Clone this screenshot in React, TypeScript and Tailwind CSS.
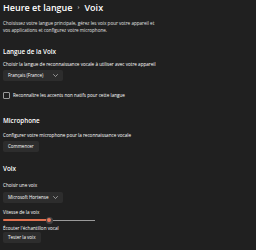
import React from "react";

const font = { fontFamily: '"Open Sans", "Liberation Sans", sans-serif' };

function Chevron() {
  return (
    <svg width="5" height="3" viewBox="0 0 10 6" fill="none">
      <path d="M1 1l4 4 4-4" stroke="#cfcfcf" strokeWidth="1.3" strokeLinecap="round" strokeLinejoin="round" />
    </svg>
  );
}

function Dropdown({ label }: { label: string }) {
  return (
    <div className="flex h-[11px] w-[60px] items-center justify-between rounded-[2px] bg-[#2d2d2d] pl-[5px] pr-[5px] text-[4.5px] text-white">
      <span>{label}</span>
      <Chevron />
    </div>
  );
}

function Btn({ label }: { label: string }) {
  return (
    <div className="flex h-[11px] w-fit items-center rounded-[2px] bg-[#2d2d2d] px-[5px] text-[4.5px] text-white">
      {label}
    </div>
  );
}

export default function App() {
  return (
    <div className="h-[250px] w-[256px] overflow-hidden bg-[#202020] pl-[3px] text-white" style={font}>
      <div className="flex items-center pt-[1px] text-[9px] font-semibold leading-[13px]">
        <span>Heure et langue</span>
        <span className="mx-[5px] text-[6px] text-[#cfcfcf]">›</span>
        <span>Voix</span>
      </div>
      <div className="mt-[6px] text-[4.6px] leading-[7px] text-[#e0e0e0]">
        Choisissez votre langue principale, gérez les voix pour votre appareil et
        <br />
        vos applications et configurez votre microphone.
      </div>
      <div className="mt-[13px] text-[6.3px] font-semibold leading-[10px]">Langue de la Voix</div>
      <div className="mt-[4px] text-[4.6px] leading-[7px]">Choisir la langue de reconnaissance vocale à utiliser avec votre appareil</div>
      <div className="mt-[2px]">
        <Dropdown label="Français (France)" />
      </div>
      <div className="mt-[11px] flex h-[7px] items-center gap-[3px]">
        <div className="h-[7px] w-[7px] rounded-[1px] border-[0.7px] border-[#9a9a9a]" />
        <span className="text-[4.6px]">Reconnaître les accents non natifs pour cette langue</span>
      </div>
      <div className="mt-[17px] text-[6.3px] font-semibold leading-[10px]">Microphone</div>
      <div className="mt-[5.5px] text-[4.6px] leading-[7px]">Configurer votre microphone pour la reconnaissance vocale</div>
      <div className="mt-[2.5px]">
        <Btn label="Commencer" />
      </div>
      <div className="mt-[12px] text-[6.3px] font-semibold leading-[10px]">Voix</div>
      <div className="mt-[7.5px] text-[4.6px] leading-[7px]">Choisir une voix</div>
      <div className="mt-[3.5px]">
        <Dropdown label="Microsoft Hortense" />
      </div>
      <div className="mt-[5.5px] text-[4.6px] leading-[7px]">Vitesse de la voix</div>
      <div className="relative mt-[1px] h-[7px] w-[92px]">
        <div className="absolute left-0 top-[2.75px] h-[1.5px] w-[46px] rounded-full bg-[#e0704f]" />
        <div className="absolute left-[46px] top-[3px] h-[1px] w-[46px] bg-[#9a9a9a]" />
        <div className="absolute left-[42.5px] top-0 h-[7px] w-[7px] rounded-full bg-[#454545]" />
        <div className="absolute left-[44.25px] top-[1.75px] h-[3.5px] w-[3.5px] rounded-full bg-[#e8765a]" />
      </div>
      <div className="mt-[1px] text-[4.6px] leading-[7px]">Écouter l'échantillon vocal</div>
      <div className="mt-[0.5px]">
        <Btn label="Tester la voix" />
      </div>
    </div>
  );
}
